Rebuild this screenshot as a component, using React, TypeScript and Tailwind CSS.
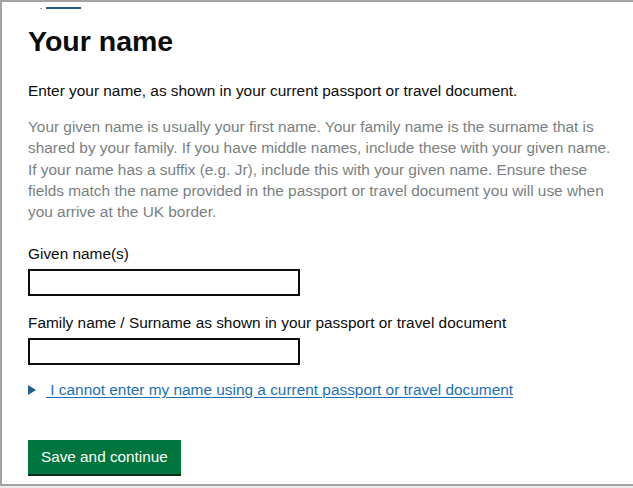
import React from "react";

const font = { fontFamily: '"Liberation Sans", Arial, sans-serif' };

export default function App() {
  return (
    <div className="w-[633px] h-[488px] bg-[#ececec] overflow-hidden" style={font}>
      <div className="h-[486px] bg-white border-t-2 border-l-2 border-b-2 border-[#a3a3a3]">
        {/* cut-off back link */}
        <div className="flex items-center pt-[5px] pl-[38px] gap-[4px]">
          <span className="w-[2px] h-[1px] bg-[#9aa7b3]" />
          <span className="w-[35px] h-[2px] bg-[#1d5f8e]" />
        </div>

        <div className="pl-[26px] pr-[20px]">
          <h1 className="mt-[14px] text-[28.5px] leading-[36px] font-bold text-[#0b0c0c]">Your name</h1>

          <p className="mt-[21px] text-[15.4px] leading-[21px] text-[#0b0c0c]">
            Enter your name, as shown in your current passport or travel document.
          </p>

          <p className="mt-[15px] w-[584px] text-[15.4px] leading-[21.25px] text-[#7a7f82]">
            Your given name is usually your first name. Your family name is the surname that is shared by your
            family. If you have middle names, include these with your given name. If your name has a suffix (e.g.
            Jr), include this with your given name. Ensure these fields match the name provided in the passport or
            travel document you will use when you arrive at the UK border.
          </p>

          <label className="block mt-[21px] text-[15.4px] leading-[21px] text-[#0b0c0c]">Given name(s)</label>
          <input
            type="text"
            className="block mt-[5px] w-[272px] h-[27px] border-2 border-[#0b0c0c] bg-white outline-none"
          />

          <label className="block mt-[16px] text-[15.4px] leading-[21px] text-[#0b0c0c]">
            Family name / Surname as shown in your passport or travel document
          </label>
          <input
            type="text"
            className="block mt-[5px] w-[272px] h-[27px] border-2 border-[#0b0c0c] bg-white outline-none"
          />

          <div className="mt-[14px] flex items-center text-[15.4px] leading-[21px]">
            <svg width="8" height="10" viewBox="0 0 8 10" className="mr-[10px]">
              <path d="M0 0 L8 5 L0 10 Z" fill="#1d5f8e" />
            </svg>
            <a href="#" className="text-[#1d70b8] underline underline-offset-2">
              &nbsp;I cannot enter my name using a current passport or travel document
            </a>
          </div>

          <button className="mt-[40px] h-[34px] px-[13px] bg-[#00753e] text-white text-[15.3px] shadow-[0_2px_0_#002d18]">
            Save and continue
          </button>
        </div>
      </div>
    </div>
  );
}
